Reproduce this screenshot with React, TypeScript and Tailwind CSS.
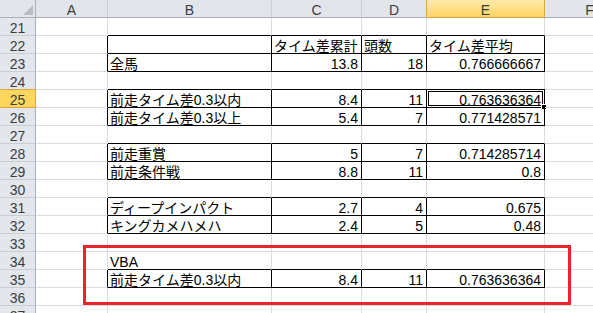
import React from "react";

const COLS = ["A", "B", "C", "D", "E", "F"];
const ROWS = Array.from({ length: 17 }, (_, i) => 21 + i);

const boxedRows = [22, 23, 25, 26, 28, 29, 31, 32, 35];
const isBoxed = (r: number, c: string) => boxedRows.includes(r) && ["B", "C", "D", "E"].includes(c);

const cells: Record<string, [string, "l" | "r"]> = {
  C22: ["タイム差累計", "l"],
  D22: ["頭数", "l"],
  E22: ["タイム差平均", "l"],
  B23: ["全馬", "l"],
  C23: ["13.8", "r"],
  D23: ["18", "r"],
  E23: ["0.766666667", "r"],
  B25: ["前走タイム差0.3以内", "l"],
  C25: ["8.4", "r"],
  D25: ["11", "r"],
  E25: ["0.763636364", "r"],
  B26: ["前走タイム差0.3以上", "l"],
  C26: ["5.4", "r"],
  D26: ["7", "r"],
  E26: ["0.771428571", "r"],
  B28: ["前走重賞", "l"],
  C28: ["5", "r"],
  D28: ["7", "r"],
  E28: ["0.714285714", "r"],
  B29: ["前走条件戦", "l"],
  C29: ["8.8", "r"],
  D29: ["11", "r"],
  E29: ["0.8", "r"],
  B31: ["ディープインパクト", "l"],
  C31: ["2.7", "r"],
  D31: ["4", "r"],
  E31: ["0.675", "r"],
  B32: ["キングカメハメハ", "l"],
  C32: ["2.4", "r"],
  D32: ["5", "r"],
  E32: ["0.48", "r"],
  B34: ["VBA", "l"],
  B35: ["前走タイム差0.3以内", "l"],
  C35: ["8.4", "r"],
  D35: ["11", "r"],
  E35: ["0.763636364", "r"],
};

function ColHeader({ col }: { col: string }) {
  const active = col === "E";
  const rightOrange = col === "D" || col === "E";
  return (
    <div
      className={`border-r border-b pt-[2px] text-center leading-[16px] text-[#3c3c3c] ${
        rightOrange ? "border-r-[#e2a443]" : "border-r-[#c9ced5]"
      } ${
        active
          ? "border-b-[#e2a443] bg-linear-to-b from-[#fdeaa9] to-[#fed55f]"
          : "border-b-[#a9b0b8] bg-[#e2e6eb]"
      }`}
    >
      {col}
    </div>
  );
}

function RowHeader({ row }: { row: number }) {
  const active = row === 25;
  const bottomOrange = row === 24 || row === 25;
  return (
    <div
      className={`border-r border-b pt-[2px] text-center leading-[16px] text-[#3c3c3c] ${
        active ? "border-r-[#e2a443] bg-[#ffd75f]" : "border-r-[#a9b0b8] bg-[#e3e7ec]"
      } ${bottomOrange ? "border-b-[#e2a443]" : "border-b-[#c9ced5]"}`}
    >
      {row}
    </div>
  );
}

function Cell({ row, col }: { row: number; col: string }) {
  const next = COLS[COLS.indexOf(col) + 1] ?? "";
  const rightBlack = isBoxed(row, col) || isBoxed(row, next);
  const bottomBlack = isBoxed(row, col) || isBoxed(row + 1, col);
  const selected = row === 25 && col === "E";
  const data = cells[`${col}${row}`];
  return (
    <div
      className={`relative border-r border-b whitespace-nowrap pt-[2px] leading-[16px] text-black ${
        rightBlack ? "border-r-black" : "border-r-[#dadcdd]"
      } ${bottomBlack ? "border-b-black" : "border-b-[#dadcdd]"} ${
        data && data[1] === "r" ? "pr-[3px] text-right" : "pl-[2px] text-left"
      }`}
    >
      {data ? data[0] : null}
      {selected && (
        <>
          {/* active cell frame + fill handle */}
          <div className="absolute -top-[1px] -left-[1px] h-[19px] w-[119px] border border-black">
            <div className="absolute inset-[1px] border border-black" />
          </div>
          <div className="absolute top-[14px] left-[114px] h-[6px] w-[6px] border border-white bg-black" />
        </>
      )}
    </div>
  );
}

export default function App() {
  return (
    <div className="relative h-[313px] w-[593px] overflow-hidden bg-white font-['Liberation_Sans','Noto_Sans_CJK_JP',sans-serif] text-[14px]">
      <div className="grid w-[635px] grid-cols-[36px_72px_164px_90px_65px_118px_90px] auto-rows-[18px]">
        <div className="flex items-end justify-end border-r border-b border-r-[#a9b0b8] border-b-[#a9b0b8] bg-[#e2e6eb] pr-[2px] pb-[2px]">
          <svg width="10" height="10" viewBox="0 0 10 10">
            <polygon points="10,0 10,10 0,10" fill="#b7bcc3" />
          </svg>
        </div>
        {COLS.map((c) => (
          <ColHeader key={c} col={c} />
        ))}
        {ROWS.map((r) => (
          <React.Fragment key={r}>
            <RowHeader row={r} />
            {COLS.map((c) => (
              <Cell key={c} row={r} col={c} />
            ))}
          </React.Fragment>
        ))}
      </div>

      {/* red annotation box */}
      <div className="absolute top-[245px] left-[83px] h-[60px] w-[488px] border-[3px] border-[#e8242c]" />
    </div>
  );
}
